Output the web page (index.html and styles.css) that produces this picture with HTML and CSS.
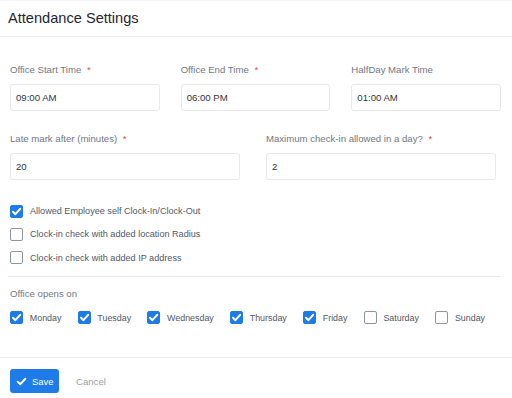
FILE: index.html
```html
<!DOCTYPE html>
<html>
<head>
<meta charset="utf-8">
<link rel="stylesheet" href="styles.css">
</head>
<body>
<div class="panel">
  <div class="header"><h1 class="title">Attendance Settings</h1></div>
  <div class="content">
    <div class="row row-3">
      <div class="field">
        <label class="label">Office Start Time <span class="req">*</span></label>
        <div class="input">09:00 AM</div>
      </div>
      <div class="field">
        <label class="label">Office End Time <span class="req">*</span></label>
        <div class="input">06:00 PM</div>
      </div>
      <div class="field">
        <label class="label">HalfDay Mark Time</label>
        <div class="input">01:00 AM</div>
      </div>
    </div>
    <div class="row row-2">
      <div class="field">
        <label class="label">Late mark after (minutes) <span class="req">*</span></label>
        <div class="input">20</div>
      </div>
      <div class="field">
        <label class="label">Maximum check-in allowed in a day? <span class="req">*</span></label>
        <div class="input">2</div>
      </div>
    </div>
    <div class="checks">
      <div class="check"><span class="box on"><svg viewBox="0 0 13 13" width="13" height="13"><path d="M3 6.8 L5.4 9.2 L10.2 3.8" fill="none" stroke="#fff" stroke-width="2" stroke-linecap="round" stroke-linejoin="round"/></svg></span><span class="check-text">Allowed Employee self Clock-In/Clock-Out</span></div>
      <div class="check"><span class="box"></span><span class="check-text">Clock-in check with added location Radius</span></div>
      <div class="check"><span class="box"></span><span class="check-text">Clock-in check with added IP address</span></div>
    </div>
    <div class="divider"></div>
    <div class="label opens">Office opens on</div>
    <div class="days">
      <div class="check day"><span class="box on"><svg viewBox="0 0 13 13" width="13" height="13"><path d="M3 6.8 L5.4 9.2 L10.2 3.8" fill="none" stroke="#fff" stroke-width="2" stroke-linecap="round" stroke-linejoin="round"/></svg></span><span class="day-text">Monday</span></div>
      <div class="check day"><span class="box on"><svg viewBox="0 0 13 13" width="13" height="13"><path d="M3 6.8 L5.4 9.2 L10.2 3.8" fill="none" stroke="#fff" stroke-width="2" stroke-linecap="round" stroke-linejoin="round"/></svg></span><span class="day-text">Tuesday</span></div>
      <div class="check day"><span class="box on"><svg viewBox="0 0 13 13" width="13" height="13"><path d="M3 6.8 L5.4 9.2 L10.2 3.8" fill="none" stroke="#fff" stroke-width="2" stroke-linecap="round" stroke-linejoin="round"/></svg></span><span class="day-text">Wednesday</span></div>
      <div class="check day"><span class="box on"><svg viewBox="0 0 13 13" width="13" height="13"><path d="M3 6.8 L5.4 9.2 L10.2 3.8" fill="none" stroke="#fff" stroke-width="2" stroke-linecap="round" stroke-linejoin="round"/></svg></span><span class="day-text">Thursday</span></div>
      <div class="check day"><span class="box on"><svg viewBox="0 0 13 13" width="13" height="13"><path d="M3 6.8 L5.4 9.2 L10.2 3.8" fill="none" stroke="#fff" stroke-width="2" stroke-linecap="round" stroke-linejoin="round"/></svg></span><span class="day-text">Friday</span></div>
      <div class="check day"><span class="box"></span><span class="day-text">Saturday</span></div>
      <div class="check day"><span class="box"></span><span class="day-text">Sunday</span></div>
    </div>
  </div>
  <div class="footer">
    <button class="btn-save"><svg viewBox="0 0 12 12" width="11" height="11"><path d="M1.8 6.2 L4.6 9 L10.2 3" fill="none" stroke="#fff" stroke-width="2" stroke-linecap="round" stroke-linejoin="round"/></svg><span>Save</span></button>
    <span class="btn-cancel">Cancel</span>
  </div>
</div>
</body>
</html>
```

FILE: styles.css
```css
html, body {
  margin: 0;
  padding: 0;
}
body {
  background: #f3f4f6;
  font-family: "Liberation Sans", Arial, sans-serif;
  width: 512px;
  height: 398px;
  overflow: hidden;
}
.panel {
  margin-top: 1px;
  background: #fff;
  height: 397px;
}
.header {
  height: 35px;
  border-bottom: 1px solid #eceef2;
  display: flex;
  align-items: center;
  padding-left: 8px;
}
.title {
  margin: 0;
  font-size: 14.6px;
  font-weight: normal;
  color: #1f2533;
  position: relative;
  top: -1px;
}
.content {
  padding: 27px 10px 0 10px;
}
.row {
  display: grid;
}
.row-3 {
  grid-template-columns: 1fr 1fr 1fr;
  column-gap: 21px;
  width: 491px;
}
.row-2 {
  grid-template-columns: 1fr 1fr;
  column-gap: 26px;
  width: 486px;
  margin-top: 22px;
}
.field {
  display: flex;
  flex-direction: column;
}
.label {
  display: block;
  font-size: 9.6px;
  line-height: 12px;
  color: #707784;
}
.req {
  color: #ef4444;
  margin-left: 3px;
}
.input {
  margin-top: 7.5px;
  height: 25px;
  border: 1px solid #e6e8ec;
  border-radius: 3px;
  display: flex;
  align-items: center;
  padding-left: 5px;
  font-size: 9.6px;
  color: #30343b;
}
.row-2 .input {
  margin-top: 8px;
}
.checks {
  margin-top: 25px;
  display: flex;
  flex-direction: column;
  gap: 10.3px;
}
.check {
  display: flex;
  align-items: center;
  height: 13px;
}
.box {
  width: 13px;
  height: 13px;
  box-sizing: border-box;
  border: 1px solid #8f949c;
  border-radius: 2px;
  flex: none;
  display: flex;
  background: #fff;
}
.box.on {
  background: #1f7be8;
  border-color: #1f7be8;
}
.box.on svg {
  margin: -1px;
}
.check-text {
  margin-left: 7px;
  font-size: 9.1px;
  color: #525866;
}
.divider {
  margin-top: 12px;
  height: 1px;
  background: #e8eaee;
  margin-left: -2px;
  width: 492px;
}
.opens {
  margin-top: 10.5px;
}
.days {
  margin-top: 11.5px;
  display: flex;
  gap: 16.2px;
}
.day-text {
  margin-left: 6.8px;
  font-size: 8.9px;
  color: #525866;
}
.footer {
  margin-top: 33px;
  border-top: 1px solid #eceef2;
  padding: 11px 10px 0 10px;
  display: flex;
  align-items: center;
}
.btn-save {
  width: 49px;
  height: 24px;
  background: #1f7be8;
  border: none;
  border-radius: 3px;
  color: #fff;
  font-family: "Liberation Sans", Arial, sans-serif;
  font-size: 9.4px;
  display: flex;
  align-items: center;
  padding: 0 0 0 6px;
  gap: 5px;
}
.btn-cancel {
  margin-left: 17px;
  font-size: 9.6px;
  color: #9aa0ab;
}
```
